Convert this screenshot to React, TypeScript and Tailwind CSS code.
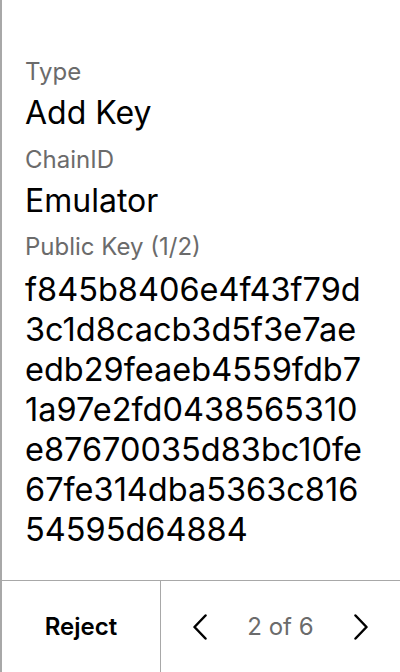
export default function App() {
    const publicKey = [
        'f845b8406e4f43f79d',
        '3c1d8cacb3d5f3e7ae',
        'edb29feaeb4559fdb7',
        '1a97e2fd0438565310',
        'e87670035d83bc10fe',
        '67fe314dba5363c816',
        '54595d64884',
    ];

    return (
        <div
            className="w-[400px] h-[672px] flex flex-col bg-white border-l-2 border-[#a8a8a8] text-black"
            style={{ fontFamily: 'Inter, "Noto Sans", sans-serif' }}
        >
            <div className="flex-1 px-[23px] pt-[56px]">
                <div className="text-[24px] leading-[32px] text-[#6b6b6b]">Type</div>
                <div className="text-[32px] leading-[40px] mt-[5px]">Add Key</div>
                <div className="text-[24px] leading-[32px] text-[#6b6b6b] mt-[11px]">ChainID</div>
                <div className="text-[32px] leading-[40px] mt-[5px]">Emulator</div>
                <div className="text-[24px] leading-[32px] text-[#6b6b6b] mt-[10px]">Public Key (1/2)</div>
                <div className="text-[32.5px] leading-[40px] mt-[7px]">
                    {publicKey.map((line) => (
                        <div key={line}>{line}</div>
                    ))}
                </div>
            </div>

            <div className="h-[92px] flex border-t border-[#a8a8a8]">
                <button className="w-[158px] h-full flex items-center justify-center text-[24px] font-semibold">
                    Reject
                </button>
                <div className="flex-1 h-full border-l border-[#a8a8a8] flex items-center justify-center gap-[40px]">
                    <svg width="14" height="26" viewBox="0 0 14 26" fill="none">
                        <path d="M12.5 1.5 L1.5 13 L12.5 24.5" stroke="black" strokeWidth="2.5" strokeLinecap="round" strokeLinejoin="round" />
                    </svg>
                    <span className="text-[24px] text-[#6b6b6b]">2 of 6</span>
                    <svg width="14" height="26" viewBox="0 0 14 26" fill="none">
                        <path d="M1.5 1.5 L12.5 13 L1.5 24.5" stroke="black" strokeWidth="2.5" strokeLinecap="round" strokeLinejoin="round" />
                    </svg>
                </div>
            </div>
        </div>
    );
}
